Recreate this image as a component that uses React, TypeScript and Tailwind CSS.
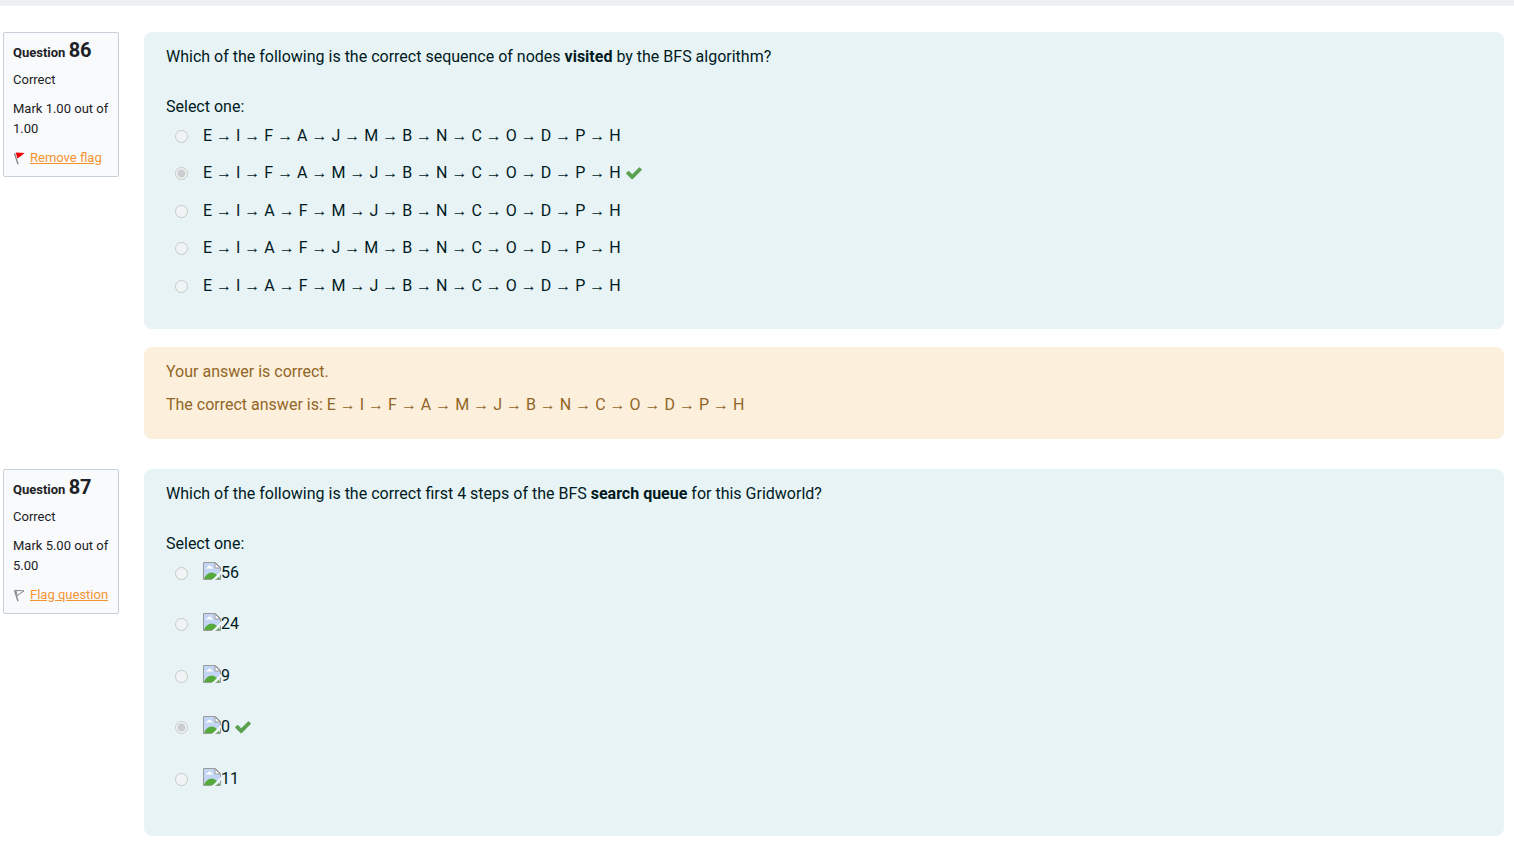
import React from 'react';

type Option = { text: string; image?: boolean; chosen?: boolean };

type Question = {
  number: number;
  mark: string;
  flagged: boolean;
  prompt: React.ReactNode;
  options: Option[];
  answer?: string;
};

const seq = (letters: string) => letters.split('').join(' → ');

const questions: Question[] = [
  {
    number: 86,
    mark: '1.00',
    flagged: true,
    prompt: (
      <>
        Which of the following is the correct sequence of nodes <strong>visited</strong> by the BFS algorithm?
      </>
    ),
    options: [
      { text: seq('EIFAJMBNCODPH') },
      { text: seq('EIFAMJBNCODPH'), chosen: true },
      { text: seq('EIAFMJBNCODPH') },
      { text: seq('EIAFJMBNCODPH') },
      { text: seq('EIAFMJBNCODPH') },
    ],
    answer: seq('EIFAMJBNCODPH'),
  },
  {
    number: 87,
    mark: '5.00',
    flagged: false,
    prompt: (
      <>
        Which of the following is the correct first 4 steps of the BFS <strong>search queue</strong> for this Gridworld?
      </>
    ),
    options: [
      { text: '56', image: true },
      { text: '24', image: true },
      { text: '9', image: true },
      { text: '0', image: true, chosen: true },
      { text: '11', image: true },
    ],
  },
];

function Flag({ on }: { on: boolean }) {
  return (
    <svg className="h-4 w-[17px] shrink-0" viewBox="0 0 17 16" fill="none" aria-hidden="true">
      <path d="M1.5 3.2 5 14.2" stroke="#858585" strokeWidth="1.3" />
      {on ? (
        <path d="M2.8 2.5 11.6 3 8.6 5.6 4.4 8.4Z" fill="#f00000" />
      ) : (
        <path d="M2 3.3 11 3.9 4.3 8.6 3 4" stroke="#858585" strokeWidth="1" />
      )}
    </svg>
  );
}

function Tick() {
  return (
    <svg className="ml-1 h-[18px] w-[18px] shrink-0" viewBox="0 0 1792 1792" fill="#5ba150" role="img" aria-label="Correct">
      <path d="M1671 566q0 40-28 68l-724 724-136 136q-28 28-68 28t-68-28l-136-136-362-362q-28-28-28-68t28-68l136-136q28-28 68-28t68 28l294 295 656-657q28-28 68-28t68 28l136 136q28 28 28 68z" />
    </svg>
  );
}

function MissingImage() {
  return (
    <svg className="-mt-1 h-[18px] w-[18px] shrink-0" viewBox="0 0 18 18" aria-hidden="true">
      <path d="M.5 .5H12.5L17.5 5.5V17.5H.5Z" fill="#c3d5f5" />
      <path d="M3 6.500q0-1.500 1.500-1.500 .5-1.500 2-1.500t2 1.500q1.500 0 1.500 1.500Z" fill="#fff" />
      <path d="M1 17q2-6 8-6.500 4 0 8 6.500Z" fill="#55aa3a" />
      <path d="M9 18 18 9v3.500L12.500 18Z" fill="#f1f7fa" />
      <path d="M9 17.500H.5V.5H12.500L17.500 5.500V9M12.500 17.500h5V12.500" fill="none" stroke="#9b9b9b" />
      <path d="M12 1v5h5Z" fill="#fff" stroke="#9b9b9b" />
    </svg>
  );
}

function InfoCard({ q }: { q: Question }) {
  return (
    <aside className="w-[116px] shrink-0 rounded-xs border border-[#c7d0d8] bg-[#f8fafc] px-[9px] pt-[5px] pb-2 text-[13px] leading-5">
      <h3 className="font-bold leading-6">
        Question <span className="text-xl leading-6">{q.number}</span>
      </h3>
      <div className="mt-[5px]">Correct</div>
      <div className="mt-[9px] -mr-1">Mark {q.mark} out of {q.mark}</div>
      <a href="#flag" className="mt-[9px] flex items-center whitespace-nowrap text-[#f59331]">
        <Flag on={q.flagged} />
        <span className="underline">{q.flagged ? 'Remove flag' : 'Flag question'}</span>
      </a>
    </aside>
  );
}

function QuestionBlock({ q }: { q: Question }) {
  return (
    <section className="flex items-start gap-[25px]">
      <InfoCard q={q} />
      <div className="min-w-0 flex-1">
        <div className="rounded-lg bg-[#e7f3f5] px-[22px] pt-[13px] pb-[23px] text-[#001a1e]">
          <p className="leading-6">{q.prompt}</p>
          <fieldset>
            <legend className="pt-[26px] leading-6">Select one:</legend>
            <div className={q.options[0].image ? 'grid h-[257px] grid-rows-5' : 'grid h-[187px] grid-rows-5'}>
              {q.options.map((o, i) => (
                <label key={i} className="flex items-start self-start pt-[5px] leading-6">
                  <input
                    type="radio"
                    name={`q${q.number}`}
                    disabled
                    defaultChecked={o.chosen}
                    className="mt-[6px] mr-[15px] ml-[9px] h-[13px] w-[13px] shrink-0"
                  />
                  <span className="flex items-center">
                    {o.image && <MissingImage />}
                    {o.text}
                    {o.chosen && <Tick />}
                  </span>
                </label>
              ))}
            </div>
          </fieldset>
        </div>
        {q.answer && (
          <div className="mt-[18px] rounded-lg bg-[#fcefdc] px-[22px] pt-[13px] pb-[22px] leading-6 text-[#916626]">
            <p>Your answer is correct.</p>
            <p className="mt-[9px]">The correct answer is: {q.answer}</p>
          </div>
        )}
      </div>
    </section>
  );
}

export default function App() {
  return (
    <div className="min-h-screen bg-white font-[Roboto,sans-serif] text-base text-[#1d2125]">
      <div className="h-[6px] bg-[#eeeff3]" />
      <main className="flex flex-col gap-[30px] pt-[26px] pr-[10px] pb-[11px] pl-[3px]">
        {questions.map((q) => (
          <QuestionBlock key={q.number} q={q} />
        ))}
      </main>
    </div>
  );
}
